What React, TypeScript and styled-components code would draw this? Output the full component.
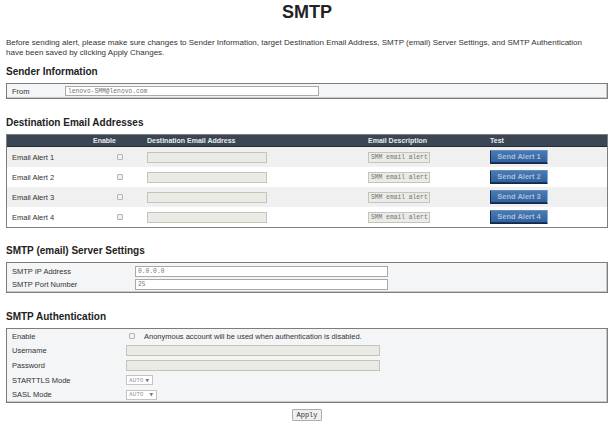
import React from 'react';
import styled, { createGlobalStyle } from 'styled-components';

const GlobalStyle = createGlobalStyle`
	html, body {
		margin: 0;
		padding: 0;
		background: #fff;
	}
	body {
		font-family: 'Liberation Sans', Arial, sans-serif;
		color: #333;
	}
`;

const Page = styled.div`
	width: 615px;
	padding: 1px 7px 0 6px;
	box-sizing: border-box;
`;

const Title = styled.h1`
	margin: 0;
	font-size: 18px;
	line-height: 22px;
	text-align: center;
	color: #222;
`;

const Intro = styled.p`
	margin: 15px 0 0 0;
	font-size: 8px;
	line-height: 9.5px;
	color: #333;
`;

const SectionTitle = styled.h2<{ $gap: number }>`
	margin: ${(p) => p.$gap}px 0 5px 0;
	font-size: 10px;
	line-height: 12px;
	font-weight: bold;
	color: #222;
`;

const Panel = styled.div<{ $pad?: number }>`
	border: 1px solid #7d7d7d;
	box-shadow: inset -1px -1px 0 #c9c9c9;
	background: #f4f5f7;
	padding: ${(p) => p.$pad ?? 2}px 0;
`;

const FieldRow = styled.div<{ $labelWidth: number; $height: number }>`
	display: grid;
	grid-template-columns: ${(p) => p.$labelWidth}px 1fr;
	align-items: center;
	height: ${(p) => p.$height}px;
	padding-left: 5px;
	font-size: 7.5px;
	color: #333;
`;

const TextInput = styled.div<{ $width: number; $disabled?: boolean; $height?: number }>`
	box-sizing: border-box;
	width: ${(p) => p.$width}px;
	height: ${(p) => p.$height ?? 11}px;
	border: 1px solid ${(p) => (p.$disabled ? '#c4c4bc' : '#a9a9a9')};
	background: ${(p) => (p.$disabled ? '#ebebe6' : '#fff')};
	font-family: 'Liberation Mono', 'Courier New', monospace;
	font-size: 6.3px;
	line-height: 9px;
	color: #777;
	padding-left: 2px;
	white-space: nowrap;
	overflow: hidden;
`;

const Check = styled.span`
	display: inline-block;
	box-sizing: border-box;
	width: 6px;
	height: 6px;
	border: 1px solid #b5b5b5;
	border-radius: 1px;
	background: #f1f1f1;
`;

const Table = styled.div`
	border: 1px solid #7d7d7d;
	box-shadow: inset -1px -1px 0 #c9c9c9;
	background: #fff;
`;

const Columns = `
	display: grid;
	grid-template-columns: 86px 54px 221px 122px 1fr;
	align-items: center;
`;

const HeaderRow = styled.div`
	${Columns}
	height: 11px;
	background: #3a4653;
	border-bottom: 1px solid #222b33;
	color: #e8ecf0;
	font-size: 7px;
	font-weight: bold;
`;

const HeaderCell = styled.div``;

const BodyRow = styled.div<{ $shade: boolean }>`
	${Columns}
	height: 20px;
	background: ${(p) => (p.$shade ? '#f0f0f0' : '#fff')};
	font-size: 7.5px;
	color: #333;
`;

const RowLabel = styled.div`
	padding-left: 5px;
`;

const CheckCell = styled.div`
	display: flex;
	justify-content: center;
`;

const SendButton = styled.div`
	box-sizing: border-box;
	width: 58px;
	height: 14px;
	border: 1px solid #14284a;
	border-right-color: #7fb0e8;
	border-top-color: #5f8cc4;
	border-radius: 1px;
	background: linear-gradient(#4a7ab4, #30609a);
	box-shadow: inset 0 -1px 0 #1c3560;
	color: #a9bfdc;
	font-size: 7.5px;
	font-weight: bold;
	line-height: 12px;
	text-align: center;
`;

const Select = styled.div<{ $width: number }>`
	box-sizing: border-box;
	width: ${(p) => p.$width}px;
	height: 10px;
	border: 1px solid #c4c4bc;
	background: #fff;
	display: flex;
	align-items: center;
	justify-content: space-between;
	padding: 0 3px 0 2px;
	font-family: 'Liberation Mono', 'Courier New', monospace;
	font-size: 6px;
	color: #999;
`;

const Caret = styled.span`
	font-family: 'DejaVu Sans', sans-serif;
	font-size: 4.5px;
	color: #777;
`;

const Inline = styled.div`
	display: flex;
	align-items: center;
	gap: 9px;
	padding-left: 3px;
`;

const Footer = styled.div`
	display: flex;
	justify-content: center;
	padding-top: 6px;
`;

const ApplyButton = styled.button`
	box-sizing: border-box;
	height: 12px;
	padding: 0 3px;
	border: 1px solid #adadad;
	border-radius: 1px;
	background: #efefef;
	font-family: 'Liberation Mono', 'Courier New', monospace;
	font-size: 7px;
	line-height: 10px;
	color: #333;
`;

const alerts = [1, 2, 3, 4];

export default function App() {
	return (
		<Page>
			<GlobalStyle />
			<Title>SMTP</Title>
			<Intro>
				Before sending alert, please make sure changes to Sender Information, target Destination Email Address,
				SMTP (email) Server Settings, and SMTP Authentication
				<br />
				have been saved by clicking Apply Changes.
			</Intro>

			<SectionTitle $gap={9}>Sender Information</SectionTitle>
			<Panel>
				<FieldRow $labelWidth={53} $height={10}>
					<span>From</span>
					<TextInput $width={254} $height={10}>lenovo-SMM@lenovo.com</TextInput>
				</FieldRow>
			</Panel>

			<SectionTitle $gap={18}>Destination Email Addresses</SectionTitle>
			<Table>
				<HeaderRow>
					<HeaderCell />
					<HeaderCell>Enable</HeaderCell>
					<HeaderCell>Destination Email Address</HeaderCell>
					<HeaderCell>Email Description</HeaderCell>
					<HeaderCell>Test</HeaderCell>
				</HeaderRow>
				{alerts.map((n) => (
					<BodyRow key={n} $shade={n % 2 === 1}>
						<RowLabel>Email Alert {n}</RowLabel>
						<CheckCell>
							<Check />
						</CheckCell>
						<TextInput $width={120} $disabled />
						<TextInput $width={62} $disabled>
							SMM email alert
						</TextInput>
						<SendButton>Send Alert {n}</SendButton>
					</BodyRow>
				))}
			</Table>

			<SectionTitle $gap={17}>SMTP (email) Server Settings</SectionTitle>
			<Panel $pad={1.5}>
				<FieldRow $labelWidth={123} $height={13}>
					<span>SMTP IP Address</span>
					<TextInput $width={253}>0.0.0.0</TextInput>
				</FieldRow>
				<FieldRow $labelWidth={123} $height={13}>
					<span>SMTP Port Number</span>
					<TextInput $width={253}>25</TextInput>
				</FieldRow>
			</Panel>

			<SectionTitle $gap={18}>SMTP Authentication</SectionTitle>
			<Panel $pad={0}>
				<FieldRow $labelWidth={114} $height={14.6}>
					<span>Enable</span>
					<Inline>
						<Check />
						<span>Anonymous account will be used when authentication is disabled.</span>
					</Inline>
				</FieldRow>
				<FieldRow $labelWidth={114} $height={14.6}>
					<span>Username</span>
					<TextInput $width={254} $disabled />
				</FieldRow>
				<FieldRow $labelWidth={114} $height={14.6}>
					<span>Password</span>
					<TextInput $width={254} $disabled />
				</FieldRow>
				<FieldRow $labelWidth={114} $height={14.6}>
					<span>STARTTLS Mode</span>
					<Select $width={27}>
						AUTO <Caret>▼</Caret>
					</Select>
				</FieldRow>
				<FieldRow $labelWidth={114} $height={14.6}>
					<span>SASL Mode</span>
					<Select $width={31}>
						AUTO <Caret>▼</Caret>
					</Select>
				</FieldRow>
			</Panel>

			<Footer>
				<ApplyButton>Apply</ApplyButton>
			</Footer>
		</Page>
	);
}
